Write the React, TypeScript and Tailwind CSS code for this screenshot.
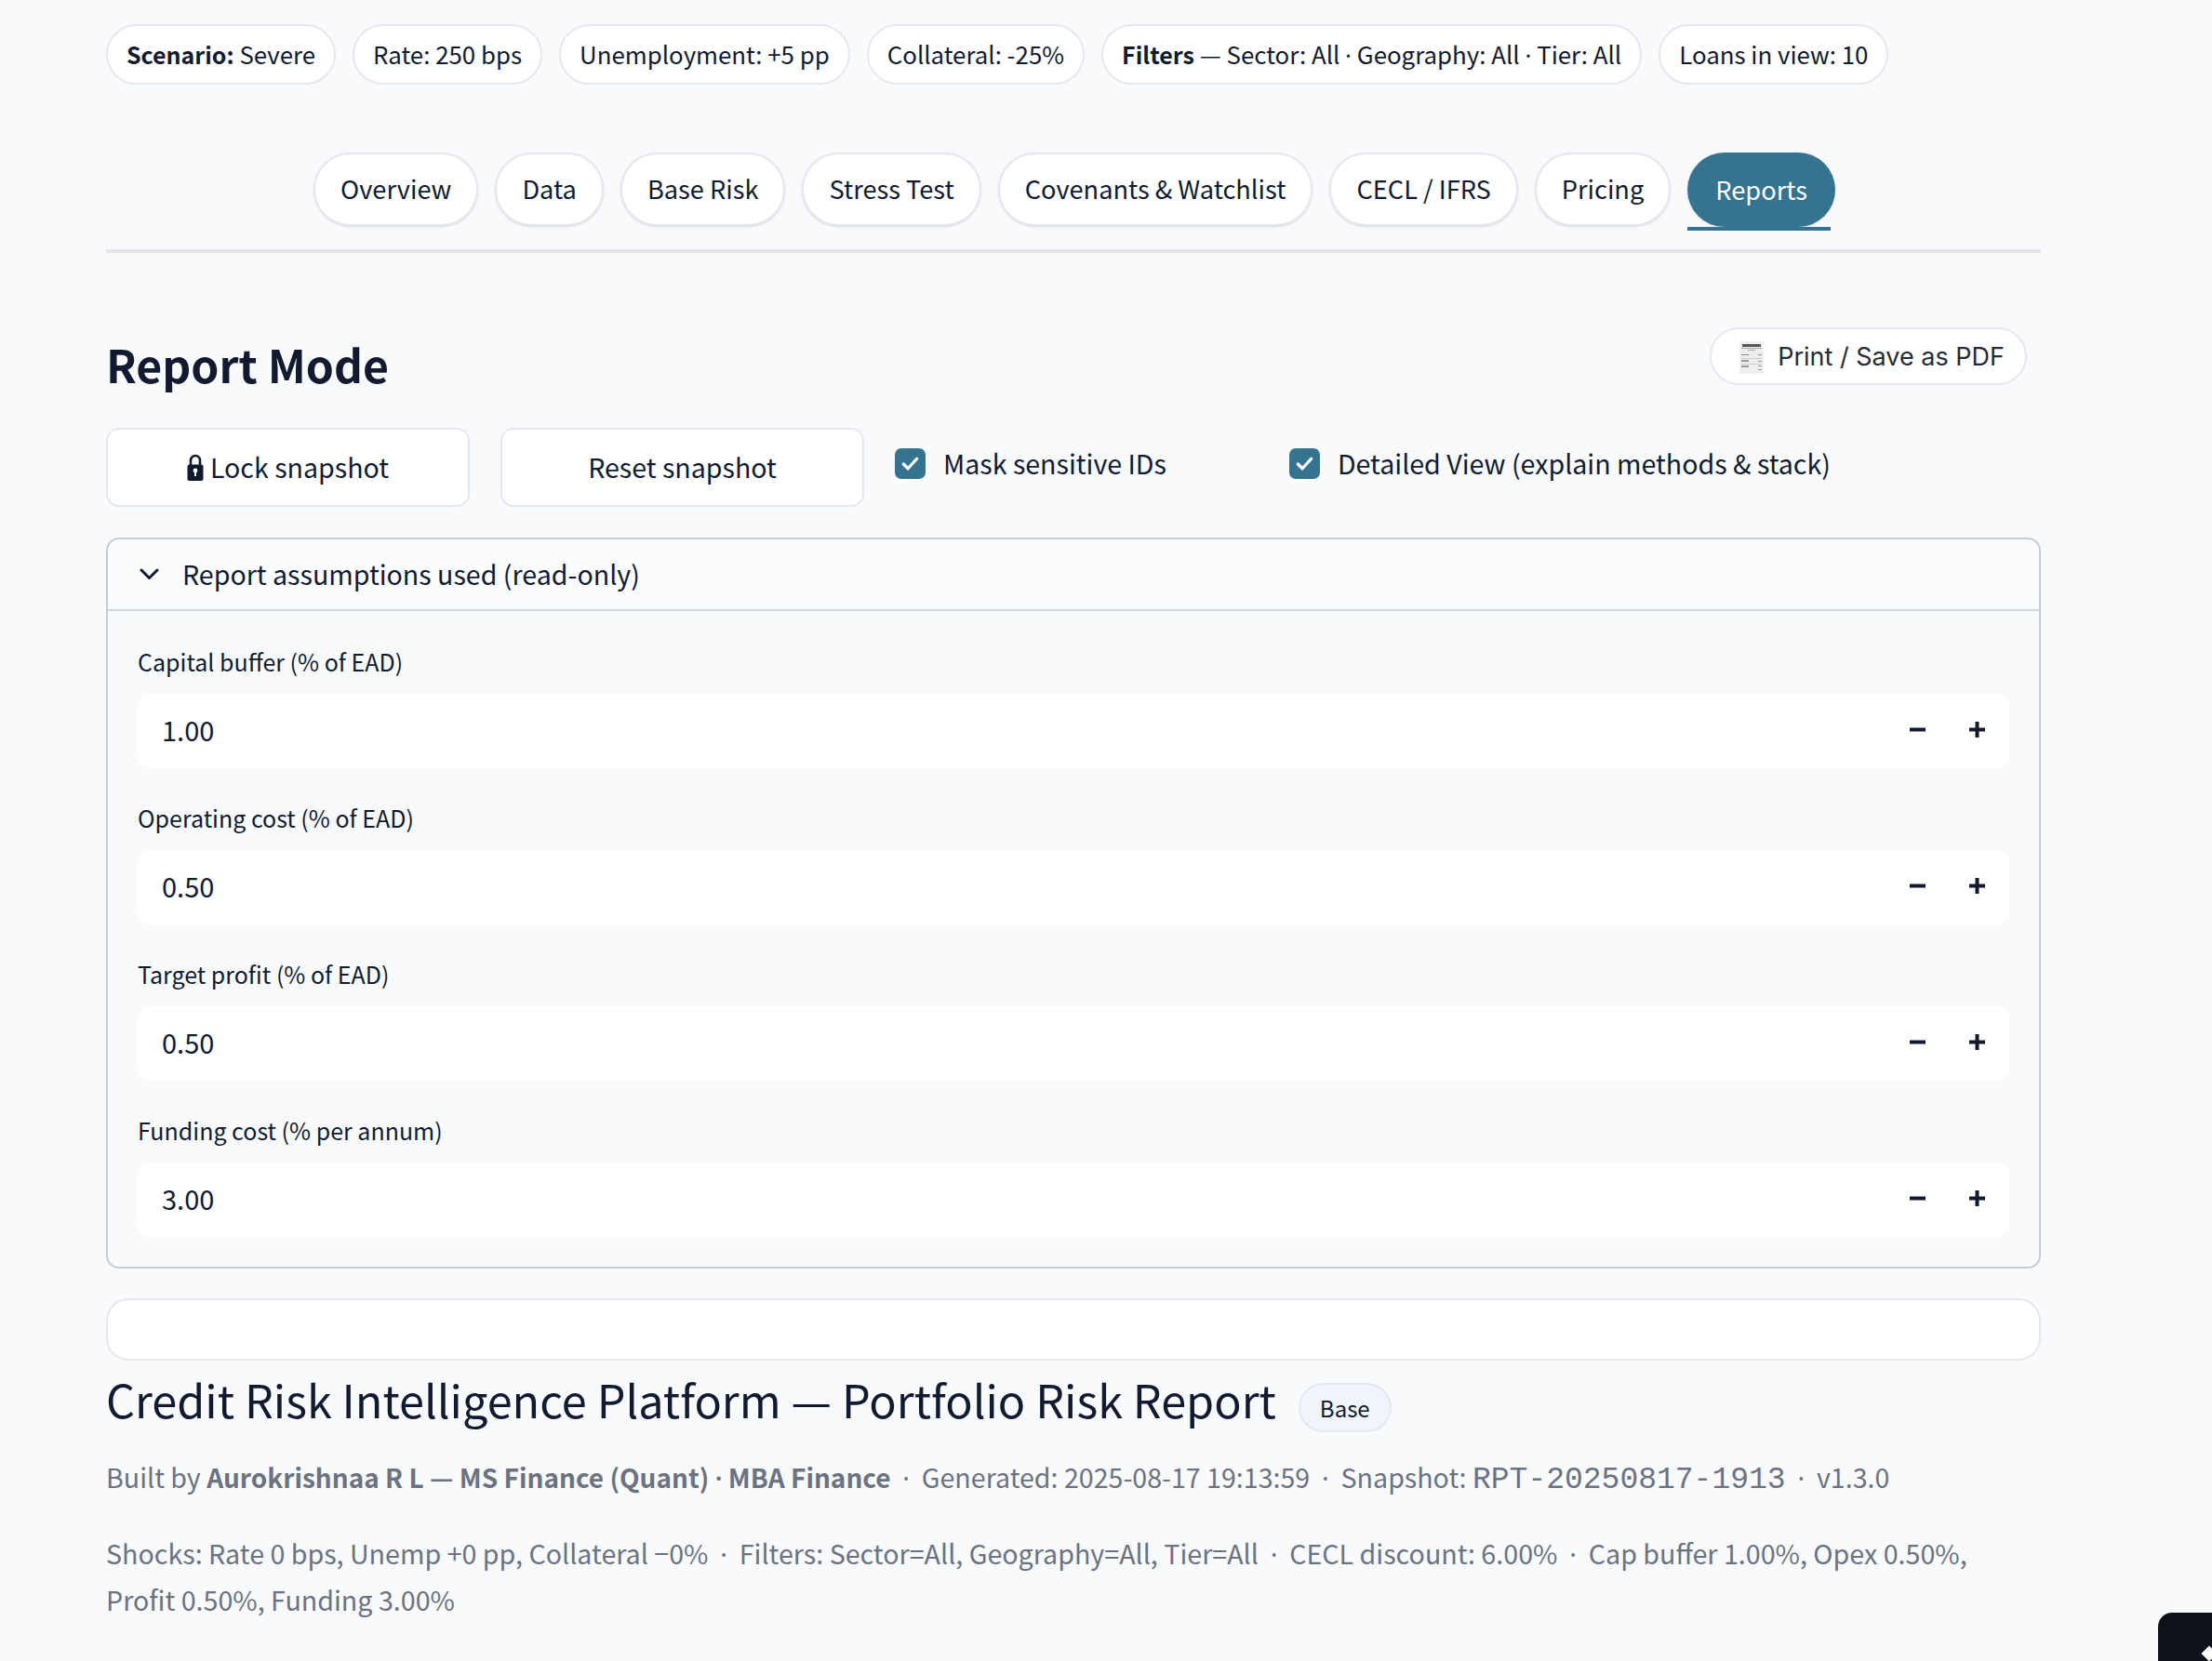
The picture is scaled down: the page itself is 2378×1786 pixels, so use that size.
import React from "react";

const Dot = () => <span className="leading-[0] [font-family:'Noto_Sans',sans-serif]">·</span>;

const chips: React.ReactNode[] = [
  <><b className="text-[25px] font-semibold">Scenario:</b> Severe</>,
  <>Rate: 250 bps</>,
  <>Unemployment: +5 pp</>,
  <>Collateral: -25%</>,
  <><b className="text-[25px] font-semibold">Filters</b> — Sector: All <Dot /> Geography: All <Dot /> Tier: All</>,
  <>Loans in view: 10</>,
];
const tabs = ["Overview", "Data", "Base Risk", "Stress Test", "Covenants & Watchlist", "CECL / IFRS", "Pricing"];
const fields = [
  ["Capital buffer (% of EAD)", "1.00"],
  ["Operating cost (% of EAD)", "0.50"],
  ["Target profit (% of EAD)", "0.50"],
  ["Funding cost (% per annum)", "3.00"],
];

function Check() {
  return (
    <span className="flex h-[33px] w-[33px] items-center justify-center rounded-[7px] bg-[#36738f]">
      <svg width="23" height="23" viewBox="0 0 24 24" fill="none" stroke="#fff" strokeWidth="3.4" strokeLinecap="round" strokeLinejoin="round">
        <path d="M4.5 12.5l5 5 10-11" />
      </svg>
    </span>
  );
}

function Receipt() {
  return (
    <svg width="26" height="35" viewBox="0 0 26 35" className="shrink-0">
      <rect width="26" height="35" fill="#eeeeee" />
      <rect x="3" y="3" width="20" height="3" fill="#555" />
      <rect x="2" y="7" width="22" height="1" fill="#aaa" />
      <rect x="9" y="9" width="8" height="1" fill="#aaa" />
      <rect x="2" y="14" width="8" height="1" fill="#888" />
      <rect x="20" y="14" width="4" height="1" fill="#999" />
      <rect x="2" y="18" width="22" height="1" fill="#ccc" />
      <rect x="2" y="20" width="8" height="2" fill="#999" />
      <rect x="20" y="21" width="4" height="1" fill="#999" />
      <rect x="2" y="24" width="22" height="1" fill="#ccc" />
      <rect x="2" y="26" width="8" height="2" fill="#999" />
      <rect x="20" y="26" width="4" height="1" fill="#999" />
      <rect x="20" y="30" width="4" height="1" fill="#999" />
    </svg>
  );
}

function Lock() {
  return (
    <svg width="18" height="29" viewBox="0 0 18 29" className="shrink-0">
      <path d="M4 13V7a5 5 0 0 1 10 0v6" fill="none" stroke="#111a2e" strokeWidth="2.6" />
      <rect x="0.5" y="11.5" width="17" height="17.5" rx="2" fill="#111a2e" />
      <circle cx="9" cy="18" r="2.4" fill="#fff" />
      <rect x="8" y="18" width="2" height="6" fill="#fff" />
    </svg>
  );
}

function Field({ label, value }: { label: string; value: string }) {
  return (
    <div className="flex flex-col">
      <div className="flex h-[56px] items-start text-[25px] leading-[42px]">{label}</div>
      <div className="flex h-[80px] items-center justify-between rounded-[14px] bg-white pl-[26px] pr-[26px] text-[29px]">
        <span className="pb-[2px]">{value}</span>
        <span className="flex items-center gap-[47px] pb-[4px]">
          <svg width="17" height="17" viewBox="0 0 17 17"><rect x="0" y="6.5" width="17" height="4" fill="#111a2e" /></svg>
          <svg width="17" height="17" viewBox="0 0 17 17"><path d="M0 6.5h6.5V0h4v6.5H17v4h-6.5V17h-4v-6.5H0z" fill="#111a2e" /></svg>
        </span>
      </div>
    </div>
  );
}

export default function App() {
  return (
    <div className="relative h-[1786px] w-[2378px] overflow-hidden bg-[#f9fafc] px-[114px] pr-[184px] pt-[26px] text-[#111a2e] [font-family:'Noto_Sans_CJK_SC','Noto_Sans',sans-serif]">
      <div className="flex gap-[18px]">
        {chips.map((c, i) => (
          <div key={i} className="flex h-[65px] items-center whitespace-pre rounded-full border-2 border-[#e6e8ef] bg-white px-[20px] pb-[1px] text-[25.85px]">
            <span>{c}</span>
          </div>
        ))}
      </div>

      <div className="mt-[73px] flex h-[108px] justify-center gap-[18px] border-b-4 border-[#e3e5ea] pl-[2px]">
        {tabs.map((t) => (
          <div key={t} className="flex h-[79px] items-center rounded-[40px] border-2 border-[#e6e8ef] bg-white px-[27px] pb-[2px] text-[27.2px] shadow-sm">
            {t}
          </div>
        ))}
        <div className="relative flex h-[80px] items-center rounded-[40px] bg-[#36738f] px-[30px] pb-[2px] text-[27.2px] text-white shadow-sm">
          Reports
          <span className="absolute bottom-[-4px] left-0 h-[4px] w-[154px] bg-[#36738f]" />
        </div>
      </div>

      <div className="mt-[80px] flex items-start justify-between pr-[15px]">
        <h1 className="text-[48.2px] font-semibold leading-[78px]">Report Mode</h1>
        <div className="flex h-[62px] items-center gap-[15px] rounded-full border-2 border-[#e6e8ef] bg-white pl-[30px] pr-[22px] pt-[2px] text-[27px] text-[#262a33] [font-family:Inter,sans-serif]">
          <Receipt />
          Print / Save as PDF
        </div>
      </div>

      <div className="mt-[30px] flex items-start">
        <div className="flex h-[85px] w-[391px] items-center justify-center gap-[7px] rounded-[14px] border-2 border-[#e6e8ef] bg-white text-[28.6px]">
          <Lock />
          Lock snapshot
        </div>
        <div className="ml-[33px] flex h-[85px] w-[391px] items-center justify-center rounded-[14px] border-2 border-[#e6e8ef] bg-white text-[28.6px]">
          Reset snapshot
        </div>
        <label className="ml-[33px] mt-[18px] flex items-center gap-[19px] text-[28.6px] leading-[40px]">
          <Check />
          Mask sensitive IDs
        </label>
        <label className="ml-[132px] mt-[18px] flex items-center gap-[19px] text-[28.6px] leading-[40px]">
          <Check />
          Detailed View (explain methods &amp; stack)
        </label>
      </div>

      <div className="mt-[33px] h-[786px] rounded-[14px] border-2 border-[#c9ccd4]">
        <div className="flex h-[77px] items-center gap-[25px] rounded-t-[14px] border-b-2 border-[#d3d5dc] bg-[#fbfcfd] pl-[34px] text-[28.6px]">
          <svg width="21" height="13" viewBox="0 0 21 13" fill="none" stroke="#111a2e" strokeWidth="3" strokeLinecap="round" strokeLinejoin="round">
            <path d="M2 2l8.5 8.5L19 2" />
          </svg>
          Report assumptions used (read-only)
        </div>
        <div className="flex flex-col gap-[32px] px-[32px] pt-[33px]">
          {fields.map(([l, v]) => (
            <Field key={l} label={l} value={v} />
          ))}
        </div>
      </div>

      <div className="mt-[32px] h-[67px] rounded-[24px] border-2 border-[#e6e8ef] bg-white" />

      <div className="mt-[6px] flex items-start gap-[24px]">
        <h2 className="text-[48.6px] leading-[70px]">Credit Risk Intelligence Platform — Portfolio Risk Report</h2>
        <span className="mt-[18px] flex h-[53px] items-center rounded-full border-2 border-[#e3e9f4] bg-[#f0f4fb] px-[21px] text-[24px]">Base</span>
      </div>

      <div className="mt-[23px] whitespace-pre text-[28.6px] leading-[50px] text-[#6b7280]">
        Built by <b className="text-[28px] font-semibold">Aurokrishnaa R L — MS Finance (Quant) <Dot /> MBA Finance</b>  <Dot />  Generated: 2025-08-17 19:13:59  <Dot />  Snapshot: <span className="text-[33px] leading-[0] [font-family:'Liberation_Mono',monospace]">RPT-20250817-1913</span>  <Dot />  v1.3.0
      </div>
      <div className="mt-[32px] whitespace-pre-wrap text-[28.65px] leading-[50px] text-[#6b7280]">
        Shocks: Rate 0 bps, Unemp +0 pp, Collateral −0%  <Dot />  Filters: Sector=All, Geography=All, Tier=All  <Dot />  CECL discount: 6.00%  <Dot />  Cap buffer 1.00%, Opex 0.50%,<br />Profit 0.50%, Funding 3.00%
      </div>

      <div className="absolute bottom-0 right-0 h-[52px] w-[58px] rounded-tl-[15px] bg-[#0e1117]">
        <span className="absolute left-[49px] top-[38px] h-[12px] w-[12px] rotate-45 bg-white" />
      </div>
    </div>
  );
}
